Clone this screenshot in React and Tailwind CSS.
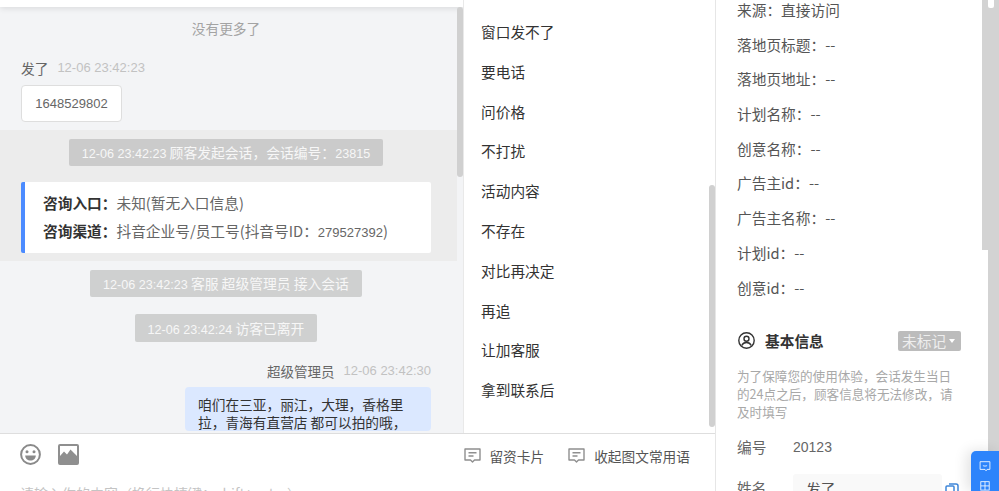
import React from "react";

const quickReplies = [
  "窗口发不了",
  "要电话",
  "问价格",
  "不打扰",
  "活动内容",
  "不存在",
  "对比再决定",
  "再追",
  "让加客服",
  "拿到联系后",
];

const sourceRows = [
  "来源：直接访问",
  "落地页标题：--",
  "落地页地址：--",
  "计划名称：--",
  "创意名称：--",
  "广告主id：--",
  "广告主名称：--",
  "计划id：--",
  "创意id：--",
];

// latin text in the shot runs narrower than the cjk around it
function Num({ children }) {
  return <span className="text-[12.6px] font-['Liberation_Sans',sans-serif]">{children}</span>;
}

function SystemTip({ children, className }) {
  return (
    <div className={`mx-auto w-fit overflow-hidden rounded-[2px] px-[13px] text-[13.8px] text-[#f7f7f7] ${className}`}>
      {children}
    </div>
  );
}

function CommentIcon() {
  return (
    <svg width="17" height="16" viewBox="0 0 17 16" fill="none" stroke="#8f8f8f" strokeWidth="1.4">
      <path d="M1 1h15v11h-5.500l-2 2-2-2H1z" strokeLinejoin="round" />
      <path d="M4.500 4.800h8M4.500 8h5" />
    </svg>
  );
}

function ChatPane() {
  return (
    <div className="relative w-[464px] h-full bg-[#f3f4f6] overflow-hidden border-r border-[#e9e9e9]">
      <div className="h-[7px] bg-white shadow-[0_1px_6px_rgba(0,0,0,0.12)] relative" />
      <p className="mt-[13px] w-[452px] text-center text-[13.7px] leading-[17px] text-[#a3a3a3]">没有更多了</p>

      <div className="mt-[21px] px-[21px]">
        <div className="flex items-center gap-[9px] h-[20px] leading-[20px]">
          <span className="text-[13.7px] text-[#666]">发了</span>
          <span className="text-[13px] text-[#c2c2c2] font-['Liberation_Sans',sans-serif]">12-06 23:42:23</span>
        </div>
        <div className="mt-[7px] w-[101px] h-[37px] rounded-[4px] border border-[#dedede] bg-white text-center leading-[35px] text-[13px] text-[#666] font-['Liberation_Sans',sans-serif]">
          1648529802
        </div>
      </div>

      <div className="mt-[8px] w-[457px] h-[131px] bg-[#ececec] pt-[9px]">
        <div className="w-[452px]">
          <SystemTip className="h-[27px] leading-[27px] bg-[#cbcbcb]">
            <Num>12-06 23:42:23</Num> 顾客发起会话，会话编号：<Num>23815</Num>
          </SystemTip>
        </div>
        <div className="mt-[16px] ml-[21px] w-[410px] h-[71px] rounded-[2px] bg-white border-l-[4px] border-[#4b8bff] pl-[18px] pt-[7px] text-[14.7px] leading-[28px] text-[#666]">
          <div>
            <span className="font-bold text-[#333]">咨询入口：</span>未知(暂无入口信息)
          </div>
          <div>
            <span className="font-bold text-[#333]">咨询渠道：</span>抖音企业号/员工号(抖音号ID：
            <span className="text-[13px] font-['Liberation_Sans',sans-serif]">279527392</span>)
          </div>
        </div>
      </div>

      <div className="w-[452px] pt-[9px]">
        <SystemTip className="h-[27px] leading-[27px] bg-[#cfd0d0]">
          <Num>12-06 23:42:23</Num> 客服 超级管理员 接入会话
        </SystemTip>
        <SystemTip className="mt-[17px] h-[28px] leading-[28px] bg-[#cfd0d0]">
          <Num>12-06 23:42:24</Num> 访客已离开
        </SystemTip>
      </div>
      <div className="w-[457px]">
        <div className="mt-[19px] pr-[26px] flex justify-end items-center gap-[9px] h-[20px]">
          <span className="text-[13.5px] text-[#666]">超级管理员</span>
          <span className="text-[13px] text-[#c2c2c2] font-['Liberation_Sans',sans-serif]">12-06 23:42:30</span>
        </div>
        <div className="mt-[6px] ml-[185px] w-[246px] rounded-[4px] bg-[#dbe8ff] pl-[13px] pr-[16px] pt-[8px] text-[13.7px] leading-[18px] text-[#333]">
          咱们在三亚，丽江，大理，香格里拉，青海有直营店 都可以拍的哦，
        </div>
      </div>

      {/* scrollbar */}
      <div className="absolute left-[457px] top-[7px] w-[6px] h-[170px] rounded-[3px] bg-[#d0d0d0]" />
    </div>
  );
}

function ReplyPane() {
  return (
    <div className="relative flex-1 h-full bg-white overflow-hidden">
      <div className="pl-[17px] pt-[12px]">
        {quickReplies.map((item) => (
          <div key={item} className="h-[39.8px] leading-[39.8px] text-[14.7px] text-[#333]">
            {item}
          </div>
        ))}
      </div>
      <div className="absolute left-[245px] top-[185px] w-[6px] h-[242px] rounded-[3px] bg-[#d0d0d0]" />
    </div>
  );
}

function Composer() {
  return (
    <div className="h-[58px] shrink-0 bg-white border-t border-[#dedede] overflow-hidden relative">
      <div className="flex items-center h-[41px] pl-[20px] pr-[25px]">
        <svg width="21" height="21" viewBox="0 0 21 21">
          <circle cx="10.500" cy="10.500" r="9.400" fill="none" stroke="#8a8a8a" strokeWidth="2" />
          <circle cx="7" cy="7.800" r="1.500" fill="#8a8a8a" />
          <circle cx="14" cy="7.800" r="1.500" fill="#8a8a8a" />
          <path d="M5.200 11.500h10.600c0 3-2.400 5-5.300 5s-5.300-2-5.300-5z" fill="#8a8a8a" />
        </svg>
        <svg className="ml-[17px]" width="21" height="21" viewBox="0 0 21 21">
          <path fill="#8f8f8f" fillRule="evenodd" d="M2 0h17a2 2 0 0 1 2 2v17a2 2 0 0 1-2 2H2a2 2 0 0 1-2-2V2a2 2 0 0 1 2-2zm0 2v10l4-4.500 3 3 3.500-5L19 12V2z" />
        </svg>
        <div className="ml-auto flex items-center gap-[24px] text-[13.7px] text-[#555] pt-[4px]">
          <span className="flex items-center gap-[8px]">
            <CommentIcon />
            留资卡片
          </span>
          <span className="flex items-center gap-[9px]">
            <CommentIcon />
            收起图文常用语
          </span>
        </div>
      </div>
      <p className="pl-[20px] mt-[8px] text-[14px] leading-[20px] text-[#c4c4c4]">请输入你的内容（换行快捷键：shift+enter）</p>
    </div>
  );
}

function InfoPane() {
  return (
    <div className="relative w-[273px] h-full shrink-0 bg-white border-l border-[#e6e6e6] overflow-hidden pl-[21px]">
      <div>
        {sourceRows.map((row) => (
          <div key={row} className="h-[34.7px] leading-[20px] text-[14.7px] text-[#555]">
            {row}
          </div>
        ))}
      </div>

      <div className="mt-[18px] flex items-center justify-between pr-[27px] h-[21px]">
        <div className="flex items-center gap-[10px] pl-[1px]">
          <svg width="17" height="17" viewBox="0 0 17 17" fill="none" stroke="#333" strokeWidth="1.400">
            <circle cx="8.500" cy="8.500" r="7.700" />
            <circle cx="8.500" cy="6.800" r="2.500" />
            <path d="M3.800 13.500c.8-2 2.600-3 4.700-3s3.900 1 4.700 3" />
          </svg>
          <span className="text-[14.7px] font-bold text-[#333]">基本信息</span>
        </div>
        <div className="flex items-center gap-[3px] w-[63px] h-[20px] rounded-[2px] bg-[#bcbcbc] pl-[4px] text-[14.7px] leading-[20px] text-[#eee]">
          未标记
          <span className="h-0 w-0 border-x-[3.5px] border-t-[4px] border-x-transparent border-t-white" />
        </div>
      </div>

      <p className="mt-[16px] w-[222px] text-[12.6px] leading-[18px] text-[#a8a8a8]">
        为了保障您的使用体验，会话发生当日的24点之后，顾客信息将无法修改，请及时填写
      </p>

      <div className="mt-[16px] flex h-[20px] leading-[20px] text-[14.7px] text-[#666]">
        <span className="w-[56px]">编号</span>
        <span className="text-[14px] font-['Liberation_Sans',sans-serif]">20123</span>
      </div>

      <div className="mt-[17px] flex text-[14.7px] text-[#666]">
        <span className="w-[56px] pt-[3px]">姓名</span>
        <div className="w-[149px] h-[36px] rounded-[3px] bg-[#f9f9f9] pl-[13px] leading-[30px] text-[#555]">发了</div>
        <svg className="ml-[3px] mt-[9px]" width="14" height="14" viewBox="0 0 14 14" fill="none" stroke="#3f86d9" strokeWidth="1.500">
          <rect x="1" y="3" width="8" height="9" rx="1" />
          <path d="M4 1h7a2 2 0 0 1 2 2v7" />
        </svg>
      </div>

      {/* inner scrollbar */}
      <div className="absolute right-0 top-0 w-[6px] h-[250px] bg-[#d3d3d3]" />
    </div>
  );
}

export default function App() {
  return (
    <div className="relative flex w-[999px] h-[491px] overflow-hidden bg-white font-['Noto_Sans_CJK_SC','Noto_Sans',sans-serif]">
      <div className="flex flex-col w-[715px] h-full shrink-0">
        <div className="flex flex-1 min-h-0">
          <ChatPane />
          <ReplyPane />
        </div>
        <Composer />
      </div>
      <InfoPane />
      <div className="flex-1 h-full bg-[#d3d3d3]">
        <div className="w-[6px] h-[8px] rounded-b-[2px] bg-white" />
      </div>

      {/* floating tool button */}
      <div className="absolute left-[971px] top-[451px] w-[28px] h-[40px] rounded-tl-[5px] bg-[#2d84fb] shadow-[-4px_0_14px_rgba(0,0,0,0.12)] flex flex-col items-center pt-[10px]">
        <svg width="16" height="16" viewBox="0 0 16 16" fill="none" stroke="white" strokeWidth="1.200">
          <path d="M1 1h14v11h-4l-1.500 2-1.500-2H1z" />
          <path d="M5 6.500c1.500 1 4.500 1 6 0" />
        </svg>
        <svg className="mt-[9px]" width="14" height="14" viewBox="0 0 14 14" fill="none" stroke="white" strokeWidth="1.200">
          <rect x="1" y="1" width="12" height="12" />
          <path d="M7 1v12M1 7h12" />
        </svg>
      </div>
    </div>
  );
}
